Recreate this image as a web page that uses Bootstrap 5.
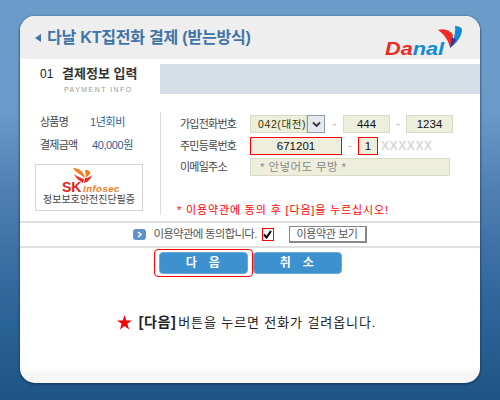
<!DOCTYPE html>
<html lang="ko">
<head>
  <meta charset="UTF-8" />
  <title>다날 KT집전화 결제</title>
  <link href="https://cdn.jsdelivr.net/npm/bootstrap@5.3.3/dist/css/bootstrap.min.css" rel="stylesheet" />
  <style>
    html, body { height: 400px; overflow: hidden; }
    body {
      background: linear-gradient(#6b9bc8 0, #6a9ac7 110px, #4f80b3 190px, #3a6fa2 260px, #2a6395 320px, #1f5585 400px);
      font-family: "Liberation Sans", "Noto Sans CJK KR", sans-serif;
      font-size: 12px;
      color: #444;
      padding: 16px 20px 0;
    }
    .pay-box {
      height: 367px;
      background: linear-gradient(#fff 350px, #f7f7f7 358px);
      border-radius: 15px;
      overflow: hidden;
      box-shadow: 0 1px 2px 1px rgba(20, 50, 90, .55);
    }
    .pay-head { height: 43px; background: #eee; padding: 0 18px 0 15px; }
    .pay-arrow { width: 0; height: 0; border: 4px solid transparent; border-right: 6px solid #3f74a8; border-left: 0; margin-right: 6px; }
    .pay-title { font-size: 16px; font-weight: 700; color: #3f74a8; letter-spacing: -.2px; }
    .sec-row { height: 35px; padding-top: 5px; }
    .sec-left { width: 140px; padding-left: 20px; }
    .sec-num { font-size: 12px; color: #222; width: 22px; line-height: 20px; }
    .sec-name { font-size: 13px; font-weight: 700; color: #333; line-height: 20px; }
    .sec-en { font-size: 7px; letter-spacing: 1.45px; color: #999; margin-left: 24px; line-height: 9px; margin-top: 1px; }
    .sec-strip { background: #d6dee8; height: 30px; }
    .form-zone { height: 109px; padding: 18px 0 0 15px; }
    .info-col { width: 125px; padding-top: 1px; }
    .info-line { height: 23px; line-height: 18px; font-size: 11px; letter-spacing: -.75px; }
    .info-key { width: 55px; padding-left: 5px; color: #444; white-space: nowrap; }
    .info-val { color: #2f5f96; white-space: nowrap; letter-spacing: -.4px; }
    .info-val-amt { margin-left: 2px; }
    .sk-box { width: 108px; height: 47px; border: 1px solid #d4d4d4; margin-top: 5px; text-align: center; }
    .sk-logo { height: 29px; padding-top: 2px; }
    .sk-cap { font-size: 10px; color: #444; line-height: 12px; white-space: nowrap; }
    .form-col { border-left: 1px solid #ddd; padding-left: 19px; height: 103px; padding-top: 1px; width: 300px; }
    .field-row { height: 22px; }
    .field-row-tight { margin-top: -1px; }
    .field-key { width: 70px; font-size: 11px; letter-spacing: -.75px; color: #444; white-space: nowrap; }
    .pay-input {
      background: #eeeedd;
      border: 1px solid #d9dcc4;
      height: 18px;
      line-height: 16px;
      font-size: 11.5px;
      color: #111;
      text-align: center;
    }
    .pay-red { border-color: #f00; }
    .w-tel { width: 57px; text-align: left; padding-left: 7px; color: #333300; font-size: 10.5px; letter-spacing: .6px; white-space: nowrap; }
    .sel-btn { width: 18px; height: 18px; background: #e6e8ee; border: 1px solid #8d99ad; margin-right: 1px; }
    .w-mid { width: 47px; }
    .w-birth { width: 92px; }
    .w-one { width: 20px; }
    .w-mail { width: 200px; text-align: left; padding-left: 9px; color: #888; letter-spacing: .4px; }
    .dash { width: 17px; text-align: center; color: #bbb; }
    .dash-sm { width: 16px; }
    .xmask { color: #d8d8d8; font-weight: 700; font-size: 12px; letter-spacing: .6px; margin-left: 3px; }
    .red-note { color: #f00; font-size: 11px; letter-spacing: .85px; padding-left: 157px; line-height: 15px; white-space: nowrap; }
    .agree-row { margin-top: 3px; height: 27px; border-top: 2px solid #e0e0e0; border-bottom: 2px solid #e0e0e0; }
    .go-dot { width: 13px; height: 11px; background: #5f93c5; border-radius: 3px; margin-right: 7px; }
    .agree-txt { font-size: 11.5px; color: #555; letter-spacing: -.75px; white-space: nowrap; }
    .agree-chk { width: 12px; height: 13px; border: 1px solid #f00; margin: 0 15px 0 5px; }
    .terms-btn {
      width: 78px; height: 17px; line-height: 13px; padding: 0; font-size: 11px; color: #555;
      background: #fff; border: 1px solid #888; border-right-width: 2px; border-bottom-width: 2px; border-radius: 0;
      letter-spacing: -.4px; white-space: nowrap;
    }
    .btn-zone { height: 34px; padding: 1px 5px 0 0; }
    .next-ring { border: 1px solid #f00; border-radius: 4px; padding: 2px 4px; }
    .blue-btn {
      width: 89px; height: 22px; padding: 0; line-height: 18px;
      background: #3d91cf; border: 1px solid #6aa9d8; border-radius: 4px;
      color: #fff; font-size: 12px; font-weight: 700; letter-spacing: .5px;
    }
    .blue-btn:hover { background: #3d91cf; color: #fff; }
    .blue-btn-off { margin-top: 3px; }
    .call-note { margin-top: 31px; font-size: 13px; color: #222; line-height: 18px; letter-spacing: .9px; white-space: nowrap; padding-right: 7px; }
    .call-note svg { margin-right: 7px; }
    .call-note b { font-size: 14px; letter-spacing: .6px; margin-right: 2px; }
  </style>
</head>
<body>
  <div class="pay-box">
    <div class="pay-head d-flex align-items-center">
      <span class="pay-arrow"></span>
      <span class="pay-title flex-grow-1">다날 KT집전화 결제 (받는방식)</span>
      <svg width="80" height="42" viewBox="0 0 80 42">
        <path d="M56 13 C62 11 68 13 71 18 L68 31 C67 24 62 17 56 13Z" fill="#ee2a24"/>
        <path d="M73 9 C76 9 79 10 80 12 C80 19 75 26 68 31 C71 24 74 17 73 9Z" fill="#0f8ad6"/>
        <path d="M70 20 L74 23 C72 26 70 29 68 31Z" fill="#4a2c8c"/>
        <text x="3" y="38" font-family="Liberation Sans" font-size="19" font-weight="700" font-style="italic" textLength="59" lengthAdjust="spacingAndGlyphs" fill="#ee2a24">Da<tspan fill="#0f8ad6">nal</tspan></text>
      </svg>
    </div>
    <div class="sec-row d-flex">
      <div class="sec-left">
        <div class="d-flex"><span class="sec-num">01</span><span class="sec-name">결제정보 입력</span></div>
        <div class="sec-en">PAYMENT INFO</div>
      </div>
      <div class="sec-strip flex-grow-1"></div>
    </div>
    <div class="form-zone d-flex">
      <div class="info-col">
        <div class="info-line d-flex"><span class="info-key">상품명</span><span class="info-val">1년회비</span></div>
        <div class="info-line d-flex"><span class="info-key">결제금액</span><span class="info-val info-val-amt">40,000원</span></div>
        <div class="sk-box">
          <div class="sk-logo d-flex justify-content-center align-items-end">
            <svg width="70" height="27" viewBox="0 0 70 27">
              <path d="M19 1 C25 1 30 5 31 11 C28 8 22 6 19 1Z" fill="#f47b20"/>
              <path d="M20 7 C24 10 27 11 30 12 L29 16 C25 14 22 11 20 7Z" fill="#ee2a24"/>
              <path d="M38 8 C37 12 34 15 30 16 L31 11 C34 11 36 10 38 8Z" fill="#ee2a24"/>
              <path d="M31 3 C35 3 37 5 36 7 C34 9 33 10 32 10Z" fill="#f47b20"/>
              <text x="8" y="25" font-family="Liberation Sans" font-size="14" font-weight="700" fill="#e2231a">SK</text>
              <text x="29" y="25" font-family="Liberation Sans" font-size="9.5" font-weight="700" font-style="italic" letter-spacing=".5" fill="#f47b20">Infosec</text>
            </svg>
          </div>
          <div class="sk-cap">정보보호안전진단필증</div>
        </div>
      </div>
      <div class="form-col">
        <div class="field-row d-flex align-items-center">
          <span class="field-key">가입전화번호</span>
          <div class="d-flex">
            <span class="pay-input w-tel">042(대전)</span>
            <span class="sel-btn d-flex align-items-center justify-content-center">
              <svg width="9" height="7" viewBox="0 0 9 7"><path d="M1 1.5 L4.5 5 L8 1.5" fill="none" stroke="#334" stroke-width="1.8"/></svg>
            </span>
          </div>
          <span class="dash">-</span><span class="pay-input w-mid">444</span>
          <span class="dash dash-sm">-</span><span class="pay-input w-mid">1234</span>
        </div>
        <div class="field-row d-flex align-items-center">
          <span class="field-key">주민등록번호</span>
          <span class="pay-input pay-red w-birth">671201</span>
          <span class="dash dash-sm">-</span><span class="pay-input pay-red w-one">1</span>
          <span class="xmask">XXXXXX</span>
        </div>
        <div class="field-row field-row-tight d-flex align-items-center">
          <span class="field-key">이메일주소</span>
          <span class="pay-input w-mail">* 안넣어도 무방 *</span>
        </div>
      </div>
    </div>
    <div class="red-note">* 이용약관에 동의 후 [다음]을 누르십시오!</div>
    <div class="agree-row d-flex align-items-center justify-content-center">
      <span class="go-dot d-flex align-items-center justify-content-center">
        <svg width="6" height="7" viewBox="0 0 6 7"><path d="M1 1 L4 3.5 L1 6" fill="none" stroke="#fff" stroke-width="1.6"/></svg>
      </span>
      <span class="agree-txt">이용약관에 동의합니다.</span>
      <span class="agree-chk d-flex align-items-center justify-content-center">
        <svg width="9" height="9" viewBox="0 0 9 9"><path d="M1 4.5 L3.5 7.5 L8 1" fill="none" stroke="#000" stroke-width="2"/></svg>
      </span>
      <button type="button" class="btn terms-btn">이용약관 보기</button>
    </div>
    <div class="btn-zone d-flex justify-content-center align-items-start">
      <div class="next-ring"><button type="button" class="btn blue-btn">다&nbsp;&nbsp;&nbsp;음</button></div>
      <button type="button" class="btn blue-btn blue-btn-off">취&nbsp;&nbsp;&nbsp;소</button>
    </div>
    <div class="call-note d-flex justify-content-center align-items-center">
      <svg width="15" height="15" viewBox="0 0 15 15"><path d="M7.5 0 L9.3 5.4 L15 5.4 L10.4 8.8 L12.1 14.5 L7.5 11 L2.9 14.5 L4.6 8.8 L0 5.4 L5.7 5.4Z" fill="#f00"/></svg>
      <span><b>[다음]</b>버튼을 누르면 전화가 걸려옵니다.</span>
    </div>
  </div>
  <script src="https://cdn.jsdelivr.net/npm/bootstrap@5.3.3/dist/js/bootstrap.bundle.min.js"></script>
</body>
</html>
